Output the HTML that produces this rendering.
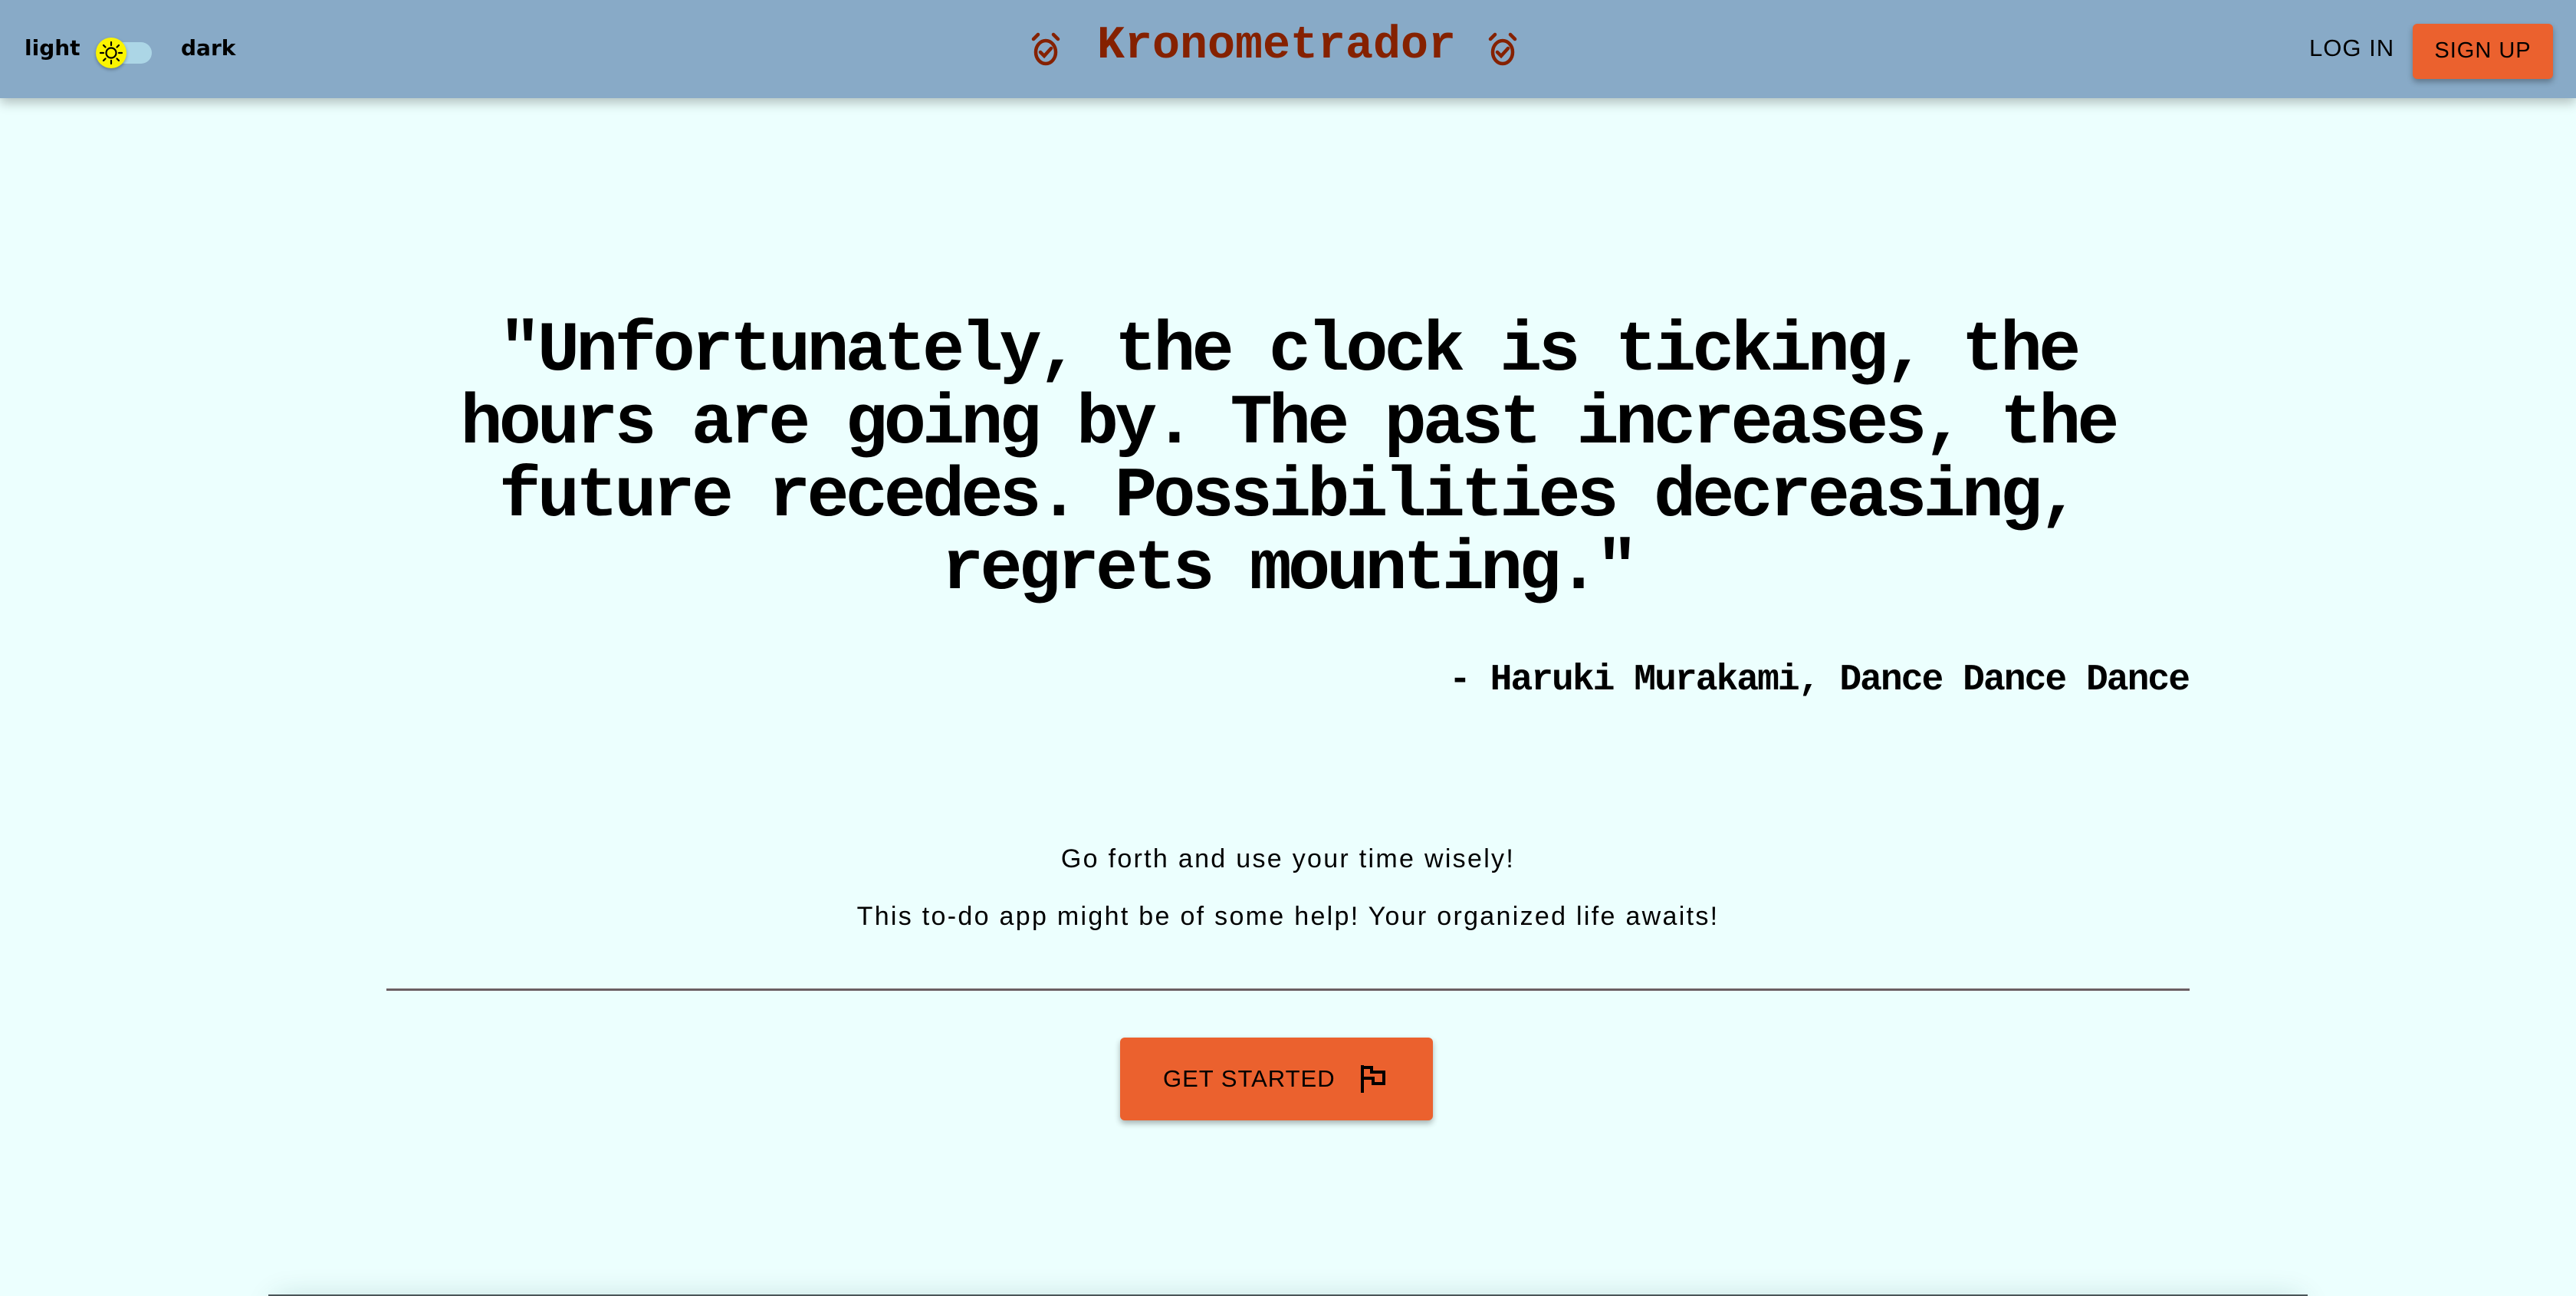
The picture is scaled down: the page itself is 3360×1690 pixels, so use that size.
<!DOCTYPE html>
<html><head><meta charset="utf-8"><style>
*{margin:0;padding:0;box-sizing:border-box}
html,body{width:3360px;height:1690px;overflow:hidden;background:#ecfffe;font-family:"Liberation Sans",sans-serif;color:#000;position:relative}
.hdr{position:absolute;left:0;top:0;width:3360px;height:128px;background:#88aac7;box-shadow:0 6px 14px rgba(0,0,0,.25);z-index:2}
.abs{position:absolute}
.lbl{font-family:"DejaVu Sans",sans-serif;font-weight:bold;font-size:28px}
.title{position:absolute;left:1420px;top:20px;width:490px;text-align:center;font-family:"Liberation Mono",monospace;font-weight:bold;font-size:60px;color:#852100;line-height:80px}
.btn{position:absolute;background:#eb612e;border-radius:6px;box-shadow:0 4px 8px rgba(0,0,0,.3)}
.q{position:absolute;left:0;width:3360px;text-align:center;font-family:"Liberation Mono",monospace;font-weight:bold;font-size:92px;letter-spacing:-5px;line-height:95px;top:410px}
.attr{position:absolute;right:505px;top:860px;font-family:"Liberation Mono",monospace;font-weight:bold;font-size:48px;letter-spacing:-2px}
.p{position:absolute;left:0;width:3360px;text-align:center;font-size:34px;letter-spacing:2.3px}
</style></head><body>
<div class="hdr">
  <div class="abs lbl" style="left:32px;top:46px">light</div>
  <div class="abs" style="left:148px;top:55px;width:50px;height:28px;border-radius:14px;background:#acd6e6"></div>
  <div class="abs" style="left:125px;top:49px;width:40px;height:40px;border-radius:50%;background:#fbf400;box-shadow:0 2px 4px rgba(0,0,0,.3)"></div>
  <svg class="abs" style="left:125px;top:49px" width="40" height="40" viewBox="0 0 40 40" fill="none" stroke="#000" stroke-width="2.2" stroke-linecap="round">
    <circle cx="20" cy="20" r="6.5"/>
    <path d="M20 6v4M20 30v4M6 20h4M30 20h4M10 10l2.5 2.5M27.5 27.5L30 30M10 30l2.5-2.5M27.5 12.5L30 10"/>
  </svg>
  <div class="abs lbl" style="left:236px;top:46px">dark</div>

  <svg class="abs" style="left:1344px;top:40px" width="40" height="46" viewBox="0 0 40 46" fill="none" stroke="#852100" stroke-width="4.5" stroke-linecap="round">
    <ellipse cx="20" cy="28" rx="13" ry="15"/>
    <path d="M4 11l6-6M36 11l-6-6M13 28l5 5 9-10"/>
  </svg>
  <div class="title">Kronometrador</div>
  <svg class="abs" style="left:1940px;top:40px" width="40" height="46" viewBox="0 0 40 46" fill="none" stroke="#852100" stroke-width="4.5" stroke-linecap="round">
    <ellipse cx="20" cy="28" rx="13" ry="15"/>
    <path d="M4 11l6-6M36 11l-6-6M13 28l5 5 9-10"/>
  </svg>

  <div class="abs" style="left:3012px;top:45px;font-size:31px;letter-spacing:1px">LOG IN</div>
  <div class="btn" style="left:3147px;top:31px;width:183px;height:72px"></div>
  <div class="abs" style="left:3147px;top:50px;width:183px;text-align:center;font-size:29px;letter-spacing:1px">SIGN UP</div>
</div>

<div class="q">"Unfortunately, the clock is ticking, the<br>hours are going by. The past increases, the<br>future recedes. Possibilities decreasing,<br>regrets mounting."</div>
<div class="attr">- Haruki Murakami, Dance Dance Dance</div>

<div class="p" style="top:1101px">Go forth and use your time wisely!</div>
<div class="p" style="top:1176px">This to-do app might be of some help! Your organized life awaits!</div>
<div class="abs" style="left:504px;top:1289px;width:2352px;height:3px;background:#6b5f63"></div>

<div class="btn" style="left:1461px;top:1353px;width:408px;height:108px"></div>
<div class="abs" style="left:1517px;top:1389px;font-size:31px;letter-spacing:1px">GET STARTED</div>
<svg class="abs" style="left:1774px;top:1389px" width="34" height="38" viewBox="0 0 34 38" fill="none" stroke="#000" stroke-width="4">
  <path d="M3 0v36M3 3h12v6h16v15H17v-7H3"/>
</svg>

<div class="abs" style="left:360px;top:1700px;width:2640px;height:40px;background:#ecfffe;box-shadow:0 -6px 40px rgba(0,70,70,.2)"></div>
<div class="abs" style="left:350px;top:1688px;width:2660px;height:2px;background:#4a5558"></div>
</body></html>
